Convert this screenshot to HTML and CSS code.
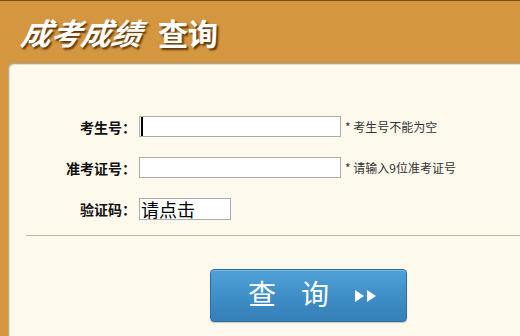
FILE: index.html
```html
<!DOCTYPE html>
<html lang="zh-CN">
<head>
    <meta charset="UTF-8">
    <meta name="viewport" content="width=device-width, initial-scale=1.0">
    <title>成考成绩查询</title>
    <link rel="stylesheet" href="styles.css">
</head>
<body>
    <div class="header">
        <h1 class="title"><span class="title-slant">成考成绩</span>查询</h1>
    </div>

    <div class="panel">
        <form class="query-form" action="#" method="post">
            <div class="form-row">
                <label class="form-label" for="ksh">考生号：</label>
                <input class="text-input caret" id="ksh" type="text">
                <span class="hint">* 考生号不能为空</span>
            </div>

            <div class="form-row">
                <label class="form-label" for="zkzh">准考证号：</label>
                <input class="text-input" id="zkzh" type="text">
                <span class="hint">* 请输入9位准考证号</span>
            </div>

            <div class="form-row">
                <label class="form-label" for="yzm">验证码：</label>
                <div class="captcha" id="yzm">请点击</div>
            </div>

            <hr class="divider">

            <div class="button-row">
                <button class="query-button" type="submit">
                    <span class="btn-text">查</span>
                    <span class="btn-text">询</span>
                    <span class="btn-arrows">
                        <svg width="22" height="12" viewBox="0 0 22 12">
                            <polygon points="0,0 9,6 0,12" fill="#fff"/>
                            <polygon points="12,0 21,6 12,12" fill="#fff"/>
                        </svg>
                    </span>
                </button>
            </div>
        </form>
    </div>
</body>
</html>
```

FILE: styles.css
```css
:root {
    --orange: #d4963f;
    --panel-bg: #fdf9ec;
    --text-color: #222;
}

* {
    margin: 0;
    padding: 0;
    box-sizing: border-box;
}

html, body {
    height: 100%;
    overflow: hidden;
}

body {
    font-family: "Noto Sans CJK SC", "Liberation Sans", sans-serif;
    background-color: var(--orange);
    border-top: 1px solid #7a4e15;
    color: var(--text-color);
}

/* Header */
.header {
    height: 62px;
    padding-left: 22px;
    display: flex;
    align-items: center;
}

.title {
    font-size: 30px;
    font-weight: 700;
    color: #fff;
    line-height: 1;
    text-shadow: 2px 2px 2px rgba(70, 35, 0, 0.85);
}

.title-slant {
    font-style: italic;
    display: inline-block;
    transform: skewX(-10deg);
    margin-right: 16px;
}

/* Panel */
.panel {
    margin-left: 8px;
    height: calc(100% - 62px);
    background-color: var(--panel-bg);
    border-top: 1px solid #a9a593;
    border-left: 1px solid #b5ae94;
    border-top-left-radius: 6px;
    box-shadow: inset 1px 1px 0 #e4e0cf;
}

.query-form {
    padding-top: 52px;
}

.form-row {
    display: flex;
    align-items: center;
    height: 21px;
    margin-bottom: 20px;
}

.form-label {
    width: 127px;
    text-align: right;
    font-size: 14px;
    font-weight: 700;
    color: #111;
    margin-right: 3px;
}

.text-input {
    width: 202px;
    height: 21px;
    border: 1px solid #acacac;
    background: #fff;
    outline: none;
}

.caret {
    box-shadow: inset 1px 0 0 #fff, inset 3px 0 0 #000;
}

.hint {
    margin-left: 4px;
    font-size: 12px;
    color: #333;
}

.captcha {
    width: 92px;
    height: 22px;
    border: 1px solid #acacac;
    background: #fff;
    font-size: 18px;
    line-height: 20px;
    padding-left: 1px;
    color: #000;
}

.divider {
    margin: -4px 0 0 17px;
    border: none;
    border-top: 1px solid #c4bc9c;
}

/* Button */
.button-row {
    padding: 33px 0 0 201px;
}

.query-button {
    width: 197px;
    height: 53px;
    display: flex;
    align-items: center;
    padding-left: 37px;
    border: 1px solid #2f6d9e;
    border-radius: 4px;
    background: linear-gradient(to bottom, #4fa2d8 0%, #3e8dc6 55%, #357fb7 100%);
    box-shadow: inset 0 1px 0 rgba(255, 255, 255, 0.25), 0 1px 1px rgba(0, 0, 0, 0.2);
    color: #fff;
    cursor: pointer;
}

.btn-text {
    font-size: 28px;
    line-height: 1;
    margin-right: 25px;
}

.btn-arrows {
    display: flex;
    margin-left: 1px;
}
```
